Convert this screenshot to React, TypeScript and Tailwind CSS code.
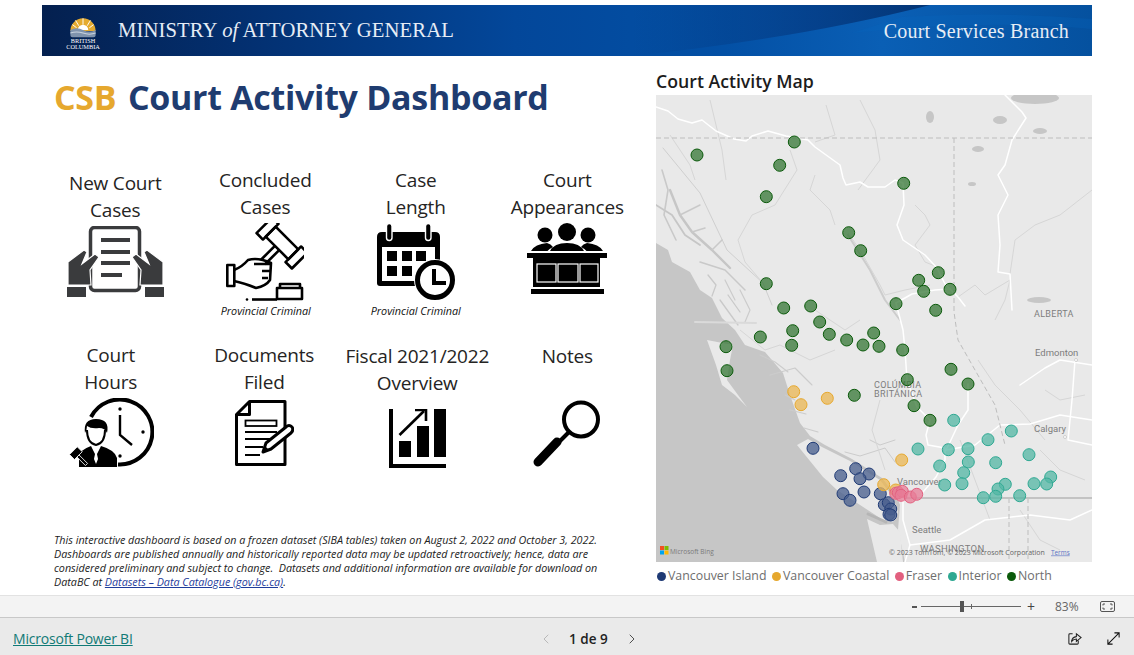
import React from "react";
import { ChevronLeft, ChevronRight } from "lucide-react";

const regions = {
  island: { label: "Vancouver Island", color: "#1f3a75" },
  coastal: { label: "Vancouver Coastal", color: "#e6a82e" },
  fraser: { label: "Fraser", color: "#e2607f" },
  interior: { label: "Interior", color: "#2ea892" },
  north: { label: "North", color: "#0b5a0b" },
};

type RegionKey = keyof typeof regions;

// page coordinates, the map svg viewBox starts at 656,95
const markers: Record<RegionKey, number[][]> = {
  north: [
    [697, 155], [794.3, 142], [779.7, 165.3], [766.3, 196.7], [903.7, 183.3], [848.7, 232.7], [860.7, 250.7],
    [938.3, 272.7], [918.7, 280.3], [923.7, 291.3], [950, 289.3], [896, 303.7], [935.7, 310.3], [766.3, 283.7],
    [783.7, 308], [810.7, 306], [819.7, 322], [792.7, 330.7], [760.3, 337], [829.3, 334.3], [873.7, 333],
    [726, 346.7], [791.7, 345.3], [846.7, 340], [863, 345], [879, 346.3], [902.7, 350], [727, 370.7], [951, 369.3],
    [968, 384], [907.3, 379.7], [854.3, 395.3], [914, 405.7], [930, 420.3],
  ],
  interior: [
    [953.7, 420.3], [1011.3, 431], [988, 439.7], [918, 449], [948.3, 449.7], [968, 448.7], [1029, 454.7],
    [968.3, 462], [995.7, 462.7], [939.7, 466], [963.7, 472.7], [1050.7, 477], [1046.7, 484], [1034, 483.7],
    [1005.3, 484.3], [998, 489], [944.7, 485], [962, 483.7], [995.7, 496.3], [983.3, 497.7], [1019.7, 495.7],
  ],
  island: [
    [813, 448.3], [855.7, 468.7], [869, 474], [860, 478.7], [840.7, 475.7], [843, 493.7], [850, 500.3], [864, 492],
    [880.3, 493.7], [884.3, 504.7], [888.3, 502.7], [890.7, 509], [889, 514.3], [890.7, 515],
  ],
  coastal: [[793.7, 391.7], [801, 404.7], [827.3, 398.3], [901.7, 460], [883.7, 484.7], [895.7, 490]],
  fraser: [[895.7, 493.3], [898.3, 492.7], [902.3, 491.3], [901, 495.3], [910.3, 497], [916.7, 494.3]],
};

const roads = [
  "M656 107 L668 111 L678 119 L692 123 L702 120 L716 131 L734 139 L746 141 L752 136 L768 131 L786 136 L808 140 L815 147 L840 165 L843 178 L846 185 L860 182 L868 187 L885 187 L895 180 L903 183 L904 205 L897 225 L903 240 L925 255 L937 268 L945 284 L958 297 L965 306",
  "M1005 95 L1022 112 L1026 118 L1012 140 L1005 165 L998 175 L1008 195 L998 215 L1000 245 L998 272 L1010 274 L1012 310",
  "M896 303 L912 294 L935 290 L950 289",
  "M896 303 L903 330 L905 350 L907 380 L917 407 L930 420 L926 435 L928 445 L945 448 L945 460 L936 477 L923 492",
  "M968 384 L968 410 L958 425 L950 442 L946 450",
  "M946 450 L975 445 L1000 425 L1030 424 L1060 415 L1092 420",
  "M1092 365 L1060 360 L1045 368 L1020 385",
  "M1075 360 L1072 400 L1068 440 L1092 445",
  "M910 545 L950 540 L985 520 L1030 515 L1070 520 L1092 510",
  "M903 500 L903 520 L910 545 L905 562",
];

const rivers = [
  "M790 150 L797 170 L775 205 L752 215 L738 240 L745 262 L762 282",
  "M815 175 L810 190 L830 210 L835 225",
  "M848 233 L860 250 L880 285 L885 295 L905 290 L930 285",
  "M915 205 L925 215 L930 225 L915 245 L925 262 L945 270",
  "M958 297 L975 285 L985 295 L1010 280 L1005 300 L995 320",
  "M1010 274 L1015 240 L1035 225 L1060 215 L1092 190",
  "M740 330 L765 350 L780 345 L810 360 L835 350",
  "M815 310 L845 330 L860 320",
  "M880 400 L872 430 L885 470",
  "M978 360 L995 385 L1020 410 L1045 440",
  "M1045 390 L1060 400 L1085 395",
  "M960 440 L975 480 L990 520",
  "M1040 450 L1060 470 L1085 480",
  "M1020 510 L1040 540 L1060 550",
  "M860 100 L875 130 L880 160 L858 190",
  "M826 105 L835 135 L815 142",
  "M710 100 L722 150 L726 180",
  "M670 135 L690 165 L695 180",
];

const fjords = [
  { d: "M663 148 L700 193 L727 250 L763 283 L772 305", w: 1, c: "#cfcfcf" },
  { d: "M670 190 L680 215 L692 232 L712 250 L730 268", w: 2.4, c: "#c6c6c6" },
  { d: "M656 205 L672 215 L685 235 L700 245", w: 1.8, c: "#c6c6c6" },
  { d: "M662 170 L668 190 L664 215 L676 240", w: 1.6, c: "#c9c9c9" },
  { d: "M680 215 L700 205 M692 232 L705 228 M712 250 L722 240 M700 262 L725 270 L745 290", w: 1.5, c: "#c9c9c9" },
  { d: "M708 275 L716 285 L712 296 M728 295 L740 312 M720 300 L738 325", w: 1.3, c: "#c9c9c9" },
  { d: "M740 290 L750 310 L745 322 M725 280 L735 300", w: 1.2, c: "#cccccc" },
  { d: "M760 355 L775 362 L788 372 M770 375 L795 368 L812 385", w: 1.1, c: "#cccccc" },
  { d: "M785 395 L795 400 M790 410 L806 414 M804 428 L818 432", w: 1.2, c: "#cccccc" },
  { d: "M845 452 L860 456 L885 448 L895 462 M870 440 L880 445 L895 440", w: 1, c: "#cccccc" },
  { d: "M848 235 L870 270 L885 300 L900 320", w: 2, c: "#cdcdcd" },
  { d: "M695 322 L756 323", w: 2, c: "#dadada" },
  { d: "M868 514 L886 522", w: 3, c: "#b5b5b5" },
];

const Marker: React.FC<{ x: number; y: number; color: string }> = ({ x, y, color }) => (
  <g>
    <circle cx={x} cy={y} r={6.3} fill="#ffffff" fillOpacity={0.35} />
    <circle cx={x} cy={y} r={6} fill={color} fillOpacity={0.62} stroke={color} strokeWidth={1} />
  </g>
);

const CourtMap: React.FC = () => (
  <svg viewBox="656 95 436 467" className="block h-[467px] w-[436px] bg-[#e9e9e9]">
    {/* sea and the coast */}
    <path
      d="M656 243 L668 250 L672 262 L690 272 L700 290 L712 298 L722 318 L735 330 L745 345 L765 352 L783 373 L790 395 L800 423 L810 436 L825 445 L852 459 L882 478 L897 497 L900 505 L898 530 L905 562 L656 562 Z"
      fill="#c6c6c6"
    />
    <path d="M707 340 L733 345 L730 360 L727 380 L738 395 L747 407 L735 395 L722 385 L716 365 Z" fill="#e9e9e9" />
    <path
      d="M797 445 L808 439 L822 447 L850 461 L880 480 L893 497 L898 512 L893 522 L883 520 L857 503 L837 490 L823 477 Z"
      fill="#e9e9e9"
    />
    <path d="M867 519 L880 525 L893 524 L900 532 L903 562 L877 562 Z" fill="#e9e9e9" />
    <g fill="none" strokeLinecap="round" strokeLinejoin="round">
      {fjords.map((f) => (
        <path key={f.d} d={f.d} stroke={f.c} strokeWidth={f.w} />
      ))}
    </g>
    <g fill="none" stroke="#d6d6d6" strokeWidth={1} strokeLinejoin="round">
      {rivers.map((d) => (
        <path key={d} d={d} />
      ))}
    </g>
    {/* lakes */}
    <g fill="#c6c6c6">
      <ellipse cx={1035} cy={98} rx={24} ry={6} />
      <ellipse cx={1000} cy={120} rx={7} ry={4} />
      <ellipse cx={1040} cy={131} rx={7} ry={3} />
      <ellipse cx={930} cy={117} rx={4} ry={6} />
      <ellipse cx={978} cy={149} rx={6} ry={3} />
      <ellipse cx={1039} cy={300} rx={12} ry={3} />
      <ellipse cx={972} cy={184} rx={4} ry={2} />
    </g>
    <g fill="none" stroke="#ffffff" strokeWidth={1.5} strokeLinejoin="round" strokeLinecap="round">
      {roads.map((d) => (
        <path key={d} d={d} />
      ))}
    </g>
    {/* borders */}
    <g fill="none" stroke="#bdbdbd" strokeWidth={1} strokeDasharray="5 3">
      <path d="M656 138 H1092" />
      <path d="M954 138 V312 L958 340 L975 370 L995 405 L1005 445" />
      <path d="M1009 498 V562" />
      <path d="M1028 498 V562" />
    </g>
    <path d="M905 498 H1092" stroke="#c3c3c3" strokeWidth={2} />
    <g fontFamily="Roboto, sans-serif" fontSize={9.5} fill="#7d7d7d">
      <text x={1034} y={317} fontSize={9} letterSpacing={0.3}>ALBERTA</text>
      <text x={1035} y={356}>Edmonton</text>
      <text x={1034} y={432}>Calgary</text>
      <text x={897} y={485}>Vancouver</text>
      <text x={912} y={533}>Seattle</text>
      <text x={920} y={552} letterSpacing={0.3}>WASHINGTON</text>
      <text x={874} y={388} letterSpacing={0.4} fontSize={9}>COLÚMBIA</text>
      <text x={874} y={397} letterSpacing={0.4} fontSize={9}>BRITÁNICA</text>
    </g>
    <circle cx={1076} cy={360} r={1.5} fill="#ffffff" stroke="#aaaaaa" strokeWidth={0.5} />
    <circle cx={1065} cy={437} r={1.5} fill="#ffffff" stroke="#aaaaaa" strokeWidth={0.5} />
    {(Object.keys(markers) as RegionKey[]).map((key) =>
      markers[key].map(([x, y]) => <Marker key={`${key}-${x}-${y}`} x={x} y={y} color={regions[key].color} />)
    )}
    {/* bing mark */}
    <rect x={660} y={546} width={4} height={4} fill="#f25022" />
    <rect x={664.5} y={546} width={4} height={4} fill="#7fba00" />
    <rect x={660} y={550.5} width={4} height={4} fill="#00a4ef" />
    <rect x={664.5} y={550.5} width={4} height={4} fill="#ffb900" />
    <text x={670} y={553.5} fontFamily="'Open Sans', sans-serif" fontSize={6.5} fill="#7a7a7a">Microsoft Bing</text>
    <text x={889} y={554.5} fontFamily="'Open Sans', sans-serif" fontSize={7} fill="#666666">© 2023 TomTom, © 2023 Microsoft Corporation</text>
    <text x={1051} y={554.5} fontFamily="'Open Sans', sans-serif" fontSize={6.4} fill="#5a73c4" textDecoration="underline">Terms</text>
  </svg>
);

const BcLogo: React.FC = () => (
  <svg viewBox="0 0 38 36" className="h-[38px] w-[40px]">
    <path d="M7 18 A12 12 0 0 1 31 18 Z" fill="#e5ab2f" />
    <path d="M14 17 A5 5 0 0 1 24 17 Z" fill="#ffffff" />
    <path d="M19 6 L19 12 M12 8 L15 13 M26 8 L23 13 M9 12 L13 15 M29 12 L25 15" stroke="#ffffff" strokeWidth={0.9} />
    <path d="M7 17 Q13 14 19 17 T31 17 V22 Q31 24 29 24 H9 Q7 24 7 22 Z" fill="#7f93ad" />
    <path d="M7 20 Q13 18 19 20 T31 20" fill="none" stroke="#c9d3df" strokeWidth={1} />
    <text x={19} y={29.5} textAnchor="middle" fontFamily="'Liberation Serif', serif" fontSize={6} fill="#ffffff">BRITISH</text>
    <text x={19} y={35} textAnchor="middle" fontFamily="'Liberation Serif', serif" fontSize={6} fill="#ffffff">COLUMBIA</text>
  </svg>
);

const NewCasesIcon: React.FC = () => (
  <svg viewBox="0 0 97 71" className="h-[71px] w-[97px]">
    <rect x={23.5} y={1.5} width={49} height={63} rx={4} fill="#fff" stroke="#3a3b3d" strokeWidth={3.5} />
    <g fill="#3a3b3d">
      <rect x={34} y={12} width={29} height={4} />
      <rect x={34} y={24} width={29} height={4} />
      <rect x={34} y={35} width={29} height={4} />
      <rect x={34} y={47} width={21} height={4} />
      <rect x={0} y={61} width={19} height={10} />
      <rect x={78} y={61} width={19} height={10} />
      <g stroke="#fff" strokeWidth={1.2}>
        <path d="M1 36 L17 24 L20 26 L15 38 L28 28 L32 31 L23 44 L24 59 H1 Z" />
        <path d="M96 36 L80 24 L77 26 L82 38 L69 28 L65 31 L74 44 L73 59 H96 Z" />
      </g>
    </g>
  </svg>
);

const GavelIcon: React.FC = () => (
  <svg viewBox="0 0 78 78" className="h-[78px] w-[78px]">
    <g fill="none" stroke="#000" strokeWidth={2.6} strokeLinejoin="round">
      <g transform="translate(56 20) rotate(45)">
        <rect x={-25} y={-11} width={9} height={22} />
        <rect x={16} y={-11} width={9} height={22} />
        <rect x={-16} y={-7} width={32} height={14} />
        <path d="M-3 7 V27 M3 7 V27" />
      </g>
      <rect x={1.3} y={42} width={7} height={21} />
      <path d="M8 47 Q16 44 22 37 Q32 34 45 40 L44 57 Q40 63 30 65 Q18 60 8 58" />
      <path d="M28 41 H44 M36 48 H44 M36 55 H42" />
      <path d="M51 76 V65 H76 V76 Z" />
      <path d="M54 65 V61 H74 V65" />
      <path d="M26 76.5 H51" />
    </g>
    <circle cx={21} cy={76.5} r={1.3} />
  </svg>
);

const CalendarIcon: React.FC = () => (
  <svg viewBox="0 0 79 78" className="h-[78px] w-[79px]">
    <path d="M5 9 H58 Q63 9 63 14 V60 Q63 63 60 63 H3 Q0 63 0 60 V14 Q0 9 5 9 Z" fill="#000" />
    <rect x={5} y={24} width={53} height={34} fill="#fff" />
    <rect x={9.5} y={0.5} width={5.5} height={17} rx={2.7} fill="#000" stroke="#fff" strokeWidth={1.4} />
    <rect x={48.5} y={0.5} width={5.5} height={17} rx={2.7} fill="#000" stroke="#fff" strokeWidth={1.4} />
    <g fill="#000">
      <rect x={10} y={28} width={10} height={10} />
      <rect x={25} y={28} width={10} height={10} />
      <rect x={39} y={28} width={10} height={10} />
      <rect x={10} y={43} width={10} height={10} />
      <rect x={25} y={43} width={10} height={10} />
    </g>
    <circle cx={58} cy={57} r={21} fill="#fff" />
    <circle cx={58} cy={57} r={17.5} fill="#fff" stroke="#000" strokeWidth={5} />
    <path d="M57 46 V60 H69" fill="none" stroke="#000" strokeWidth={4} />
  </svg>
);

const BenchIcon: React.FC = () => (
  <svg viewBox="0 0 80 71" className="h-[71px] w-[80px]">
    <circle cx={40} cy={9} r={9} />
    <circle cx={18} cy={12} r={7.5} />
    <circle cx={61} cy={12} r={7.5} />
    <path d="M4 28 Q8 21 20 20 Q24 21 26 24 Q22 26 20.5 28 Z" />
    <path d="M76 28 Q72 21 60 20 Q56 21 54 24 Q58 26 59.5 28 Z" />
    <path d="M23 28 Q27 20 40 20 Q53 20 57 28 Z" />
    <rect x={0} y={30} width={80} height={5} />
    <rect x={6} y={35} width={67} height={29} />
    <g fill="#000" stroke="#fff" strokeWidth={1.2}>
      <rect x={10} y={41} width={19} height={18} />
      <rect x={31} y={41} width={20} height={18} />
      <rect x={53} y={41} width={18} height={18} />
    </g>
    <rect x={4} y={66} width={73} height={5} />
  </svg>
);

const HoursIcon: React.FC = () => (
  <svg viewBox="0 0 85 70" className="h-[70px] w-[85px]">
    <path d="M22 19 A32.5 32.5 0 1 1 49 66.4" fill="none" stroke="#000" strokeWidth={4} />
    <path d="M51 17 V37 L63 47" fill="none" stroke="#000" strokeWidth={2.4} />
    <circle cx={51} cy={11} r={1.7} />
    <circle cx={74} cy={34} r={1.7} />
    <circle cx={51} cy={58} r={1.7} />
    <path d="M16 35 Q14 21 27 21 Q41 21 38 35 Q36 30 30 30 Q22 31 18 28 Q18 32 16 35 Z" />
    <path d="M18 32 Q18 45 27 47 Q36 45 36 32" fill="none" stroke="#000" strokeWidth={2} />
    <path d="M10 69 V58 Q11 52 22 48 L27 58 L32 48 Q46 52 48 60 V69 Z" />
    <path d="M27 51 L25 61 L27 66 L29 61 Z" fill="#fff" />
    <g transform="translate(9 58) rotate(45)">
      <rect x={-7} y={-6} width={7} height={11} stroke="#fff" strokeWidth={0.8} />
      <rect x={0} y={-1.5} width={12} height={3} fill="#000" stroke="#fff" strokeWidth={0.8} />
    </g>
  </svg>
);

const DocumentIcon: React.FC = () => (
  <svg viewBox="0 0 59 66" className="h-[66px] w-[59px]">
    <path d="M14.5 1.5 H50 V64.5 H1.5 V14.5 Z M14.5 1.5 V14.5 H1.5" fill="none" stroke="#000" strokeWidth={3} strokeLinejoin="round" />
    <rect x={10.5} y={20.5} width={31} height={5.5} fill="none" stroke="#000" strokeWidth={1.8} />
    <path d="M10 32 H42 M10 39 H37 M10 47 H28 M10 55 H25" stroke="#000" strokeWidth={2} />
    <path d="M28 52 L31 43 L51 27 Q54 24 57 27 Q59 30 56 33 L36 49 Z" fill="#fff" stroke="#000" strokeWidth={3} strokeLinejoin="round" />
    <path d="M29 52 L30 46 L34 50 Z" />
  </svg>
);

const ChartIcon: React.FC = () => (
  <svg viewBox="0 0 57 59" className="h-[59px] w-[57px]">
    <path d="M0 0 H4 V55 H57 V59 H0 Z" />
    <rect x={10} y={32} width={12} height={16} />
    <rect x={28} y={17} width={12} height={31} />
    <rect x={45} y={0} width={12} height={48} />
    <path d="M10.5 26 L35 2" stroke="#000" strokeWidth={2.6} />
    <path d="M26 1 H37 V12" fill="none" stroke="#000" strokeWidth={2.6} />
  </svg>
);

const LensIcon: React.FC = () => (
  <svg viewBox="0 0 68 67" className="h-[67px] w-[68px]">
    <circle cx={48} cy={19.5} r={17} fill="none" stroke="#000" strokeWidth={4} />
    <path d="M36 32 L24 44" stroke="#000" strokeWidth={4} />
    <path d="M24 42 L5 62" stroke="#000" strokeWidth={9} strokeLinecap="round" />
  </svg>
);

const ShareIcon: React.FC = () => (
  <svg viewBox="0 0 16 16" className="h-[15px] w-[15px]" fill="none" stroke="#222" strokeWidth={1.1}>
    <path d="M6 3 H3 Q2 3 2 4 V13 Q2 14 3 14 H11 Q12 14 12 13 V10" />
    <path d="M5 11 Q5.5 6.5 10 6 V3 L15 7 L10 11 V8.5 Q7 8.5 5 11 Z" />
  </svg>
);

const ExpandIcon: React.FC = () => (
  <svg viewBox="0 0 16 16" className="h-[15px] w-[15px]" fill="none" stroke="#111" strokeWidth={1.1}>
    <path d="M2 14 L14 2 M9 2 H14 V7 M2 9 V14 H7" />
  </svg>
);

const FitIcon: React.FC = () => (
  <svg viewBox="0 0 15 11" className="h-[11px] w-[15px]" fill="none" stroke="#555" strokeWidth={1}>
    <rect x={0.5} y={0.5} width={14} height={10} rx={1.5} />
    <path d="M3 4.5 V3 H5 M10 3 H12 V4.5 M12 6.5 V8 H10 M5 8 H3 V6.5" />
  </svg>
);

type TileProps = {
  label: string[];
  icon: React.ReactNode;
  note?: string;
  labelClass: string;
  iconClass: string;
  noteClass?: string;
};

const Tile: React.FC<TileProps> = ({ label, icon, note, labelClass, iconClass, noteClass }) => (
  <div className="flex flex-col items-center">
    <div className={`text-center text-[19px] leading-[27px] tracking-[-0.2px] text-[#252423] ${labelClass}`}>
      {label.map((line) => (
        <div key={line} className="whitespace-nowrap">{line}</div>
      ))}
    </div>
    <div className={iconClass}>{icon}</div>
    {note && <div className={`mt-[3px] whitespace-nowrap text-[10.8px] italic leading-[14px] text-[#111] ${noteClass}`}>{note}</div>}
  </div>
);

export default function App() {
  return (
    <div className="flex h-[655px] w-[1134px] flex-col overflow-hidden bg-white font-['Open_Sans',sans-serif]">
      <main className="h-[595px] px-[42px] pt-[5px]">
        <header className="relative flex h-[51px] items-center justify-between overflow-hidden bg-[linear-gradient(90deg,#04204f_0%,#033071_20%,#03479a_45%,#0350a5_65%,#0a5fb5_80%,#05519f_100%)] pl-[21px] pr-[23px]">
          <svg viewBox="0 0 1050 51" className="absolute inset-0 h-[51px] w-[1050px]">
            <defs>
              <linearGradient id="bannerWedge" x1="0" x2="1" y1="0" y2="0">
                <stop offset="0" stopColor="#043a82" stopOpacity={0} />
                <stop offset="0.6" stopColor="#043a82" stopOpacity={0.75} />
                <stop offset="1" stopColor="#03306e" stopOpacity={0.9} />
              </linearGradient>
            </defs>
            <path d="M590 51 Q760 33 888 0 H590 Z" fill="url(#bannerWedge)" />
            <path d="M860 12 Q950 6 1050 14 V24 Q950 14 810 28 Z" fill="#0666c0" fillOpacity={0.25} />
          </svg>
          <div className="relative flex items-center">
            <BcLogo />
            <span className="ml-[15px] whitespace-nowrap font-['Liberation_Serif',serif] text-[20.7px] tracking-[0.1px] text-[#e6edf6]">
              MINISTRY <i>of</i> ATTORNEY GENERAL
            </span>
          </div>
          <span className="relative whitespace-nowrap font-['Liberation_Serif',serif] text-[20px] tracking-[0.2px] text-[#e6edf6]">
            Court Services Branch
          </span>
        </header>

        <div className="flex">
          <section className="flex h-[539px] w-[602px] flex-col">
            <h1 className="ml-[12px] mt-[17px] whitespace-nowrap text-[34px] font-bold leading-[48px] tracking-[-0.3px] text-[#1f3c70]">
              <span className="mr-[3px] text-[#e6a82e]">CSB</span> Court Activity Dashboard
            </h1>
            <div className="mt-[46px] grid grid-cols-4">
              <Tile label={["New Court", "Cases"]} labelClass="mt-[3px] -ml-[4px]" iconClass="mt-[2px] -ml-[4px]" icon={<NewCasesIcon />} />
              <Tile label={["Concluded", "Cases"]} labelClass="-ml-[5px]" iconClass="mt-[2px] -ml-[5px]" note="Provincial Criminal" noteClass="-ml-[4px]" icon={<GavelIcon />} />
              <Tile label={["Case", "Length"]} labelClass="-ml-[5px]" iconClass="mt-[2px] -ml-[4px]" note="Provincial Criminal" noteClass="-ml-[5px]" icon={<CalendarIcon />} />
              <Tile label={["Court", "Appearances"]} labelClass="-ml-[3px]" iconClass="mt-[2px] -ml-[3px]" icon={<BenchIcon />} />
            </div>
            <div className="mt-[24px] grid grid-cols-4">
              <Tile label={["Court", "Hours"]} labelClass="-ml-[13px]" iconClass="mt-[2px] -ml-[12px]" icon={<HoursIcon />} />
              <Tile label={["Documents", "Filed"]} labelClass="-ml-[7px]" iconClass="mt-[4px] -ml-[7px]" icon={<DocumentIcon />} />
              <Tile label={["Fiscal 2021/2022", "Overview"]} labelClass="mt-[1px] -ml-[2px]" iconClass="mt-[12px] -ml-[1px]" icon={<ChartIcon />} />
              <Tile label={["Notes", "\u00a0"]} labelClass="mt-[1px] -ml-[3px]" iconClass="mt-[3px] -ml-[3px]" icon={<LensIcon />} />
            </div>
            <p className="ml-[12px] mt-auto w-[550px] pb-[6px] text-[10.75px] italic leading-[14px] text-[#222]">
              This interactive dashboard is based on a frozen dataset (SIBA tables) taken on August 2, 2022 and October 3, 2022.
              Dashboards are published annually and historically reported data may be updated retroactively; hence, data are
              considered preliminary and subject to change.&nbsp; Datasets and additional information are available for download on
              DataBC at <a className="text-[#1f3c9c] underline">Datasets – Data Catalogue (gov.bc.ca)</a>.
            </p>
          </section>

          <section className="ml-[12px] w-[436px]">
            <h2 className="mt-[13px] h-[26px] text-[17.7px] font-semibold leading-[24px] text-[#1c1c1c]">Court Activity Map</h2>
            <CourtMap />
            <ul className="mt-[6px] flex items-center text-[12.35px] leading-[16px] text-[#6e6e6e]">
              {(Object.keys(regions) as RegionKey[]).map((key) => (
                <li key={key} className="ml-[1px] mr-[4.5px] flex items-center gap-[2px] whitespace-nowrap">
                  <span className="h-[9px] w-[9px] rounded-full" style={{ backgroundColor: regions[key].color }} />
                  {regions[key].label}
                </li>
              ))}
            </ul>
          </section>
        </div>
      </main>

      <div className="flex h-[23px] items-center justify-end border-y border-t-[#e2e2e2] border-b-[#c8c8c8] bg-[#f3f3f3] pr-[19px] text-[12px] text-[#666]">
        <span className="mr-[4px] h-[2px] w-[5px] bg-[#555]" />
        <div className="relative h-[1px] w-[100px] bg-[#666]">
          <span className="absolute left-[39px] top-[-5px] h-[11px] w-[4px] bg-[#555]" />
          <span className="absolute left-[50px] top-[-2px] h-[5px] w-[1px] bg-[#666]" />
        </div>
        <span className="ml-[6px] text-[14px] leading-none text-[#444]">+</span>
        <span className="ml-[20px] w-[24px] text-[12px]">83%</span>
        <span className="ml-[21px]"><FitIcon /></span>
      </div>

      <footer className="relative flex h-[37px] items-center bg-[#eaeaea] pl-[13px] pr-[13px] pt-[3px]">
        <a className="text-[14px] font-medium tracking-[-0.2px] text-[#117a76] underline">Microsoft Power BI</a>
        <div className="absolute left-[538px] top-[11px] flex items-center">
          <ChevronLeft size={16} strokeWidth={1.4} className="text-[#b5b5b5]" />
          <span className="ml-[15px] text-[13.5px] font-semibold text-[#222]">1 de 9</span>
          <ChevronRight size={16} strokeWidth={1.4} className="ml-[16px] text-[#444]" />
        </div>
        <div className="ml-auto flex items-center gap-[24px]">
          <ShareIcon />
          <ExpandIcon />
        </div>
      </footer>
    </div>
  );
}
